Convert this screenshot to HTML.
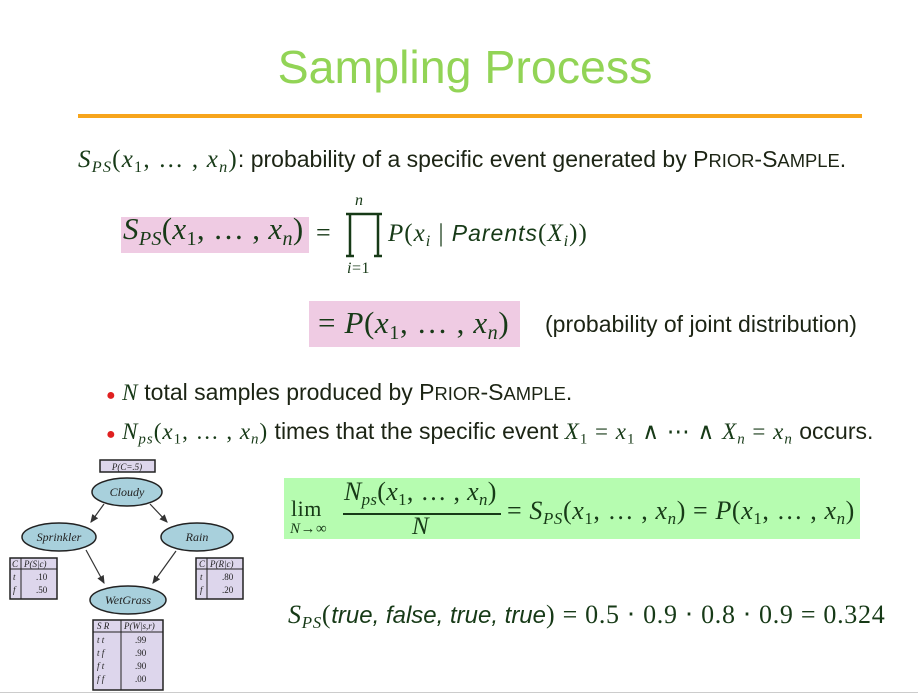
<!DOCTYPE html>
<html><head><meta charset="utf-8"><style>
body{margin:0;width:918px;height:695px;background:#fff;position:relative;overflow:hidden;font-family:"Liberation Sans",sans-serif;color:#1c2414}
.a{position:absolute;white-space:nowrap}
.m{font-family:"Liberation Serif",serif;color:#173a17;letter-spacing:0.5px}
.m i{font-style:italic}
sub{font-size:65%;vertical-align:-0.3em}
.sc{font-size:80%}
.bul{color:#e02020;font-size:16px}
</style></head><body>
<div class="a" style="left:0;width:930px;top:40px;text-align:center;font-size:46.5px;color:#92d456">Sampling Process</div>
<div class="a" style="left:78px;top:114px;width:784px;height:4px;background:#f7a51c"></div>

<div class="a" style="left:78px;top:146px;font-size:23px"><span class="m" style="font-size:25px;letter-spacing:1.2px"><i>S<sub>PS</sub></i>(<i>x</i><sub>1</sub>, … , <i>x<sub>n</sub></i>)</span>: probability of a specific event generated by P<span class="sc">RIOR</span>-S<span class="sc">AMPLE</span>.</div>

<div class="a" style="left:121px;top:217px;width:188px;height:36px;background:#efcbe3"></div>
<div class="a m" style="left:123px;top:211px;font-size:31px;letter-spacing:0.3px"><i>S<sub>PS</sub></i>(<i>x</i><sub>1</sub>, … , <i>x<sub>n</sub></i>)</div>
<div class="a m" style="left:316px;top:218px;font-size:26px">=</div>
<svg class="a" style="left:344px;top:212px" width="40" height="46"><path d="M2 2H38M6 2V44M34 2V44M2 44H10M30 44H38" stroke="#173a17" stroke-width="2.5" fill="none"/></svg>
<div class="a m" style="left:355px;top:192px;font-size:16px"><i>n</i></div>
<div class="a m" style="left:347px;top:260px;font-size:16px"><i>i</i>=1</div>
<div class="a m" style="left:388px;top:220px;font-size:25px;letter-spacing:1px"><i>P</i>(<i>x<sub>i</sub></i> | <i style="font-family:'Liberation Sans',sans-serif;font-size:23px">Parents</i>(<i>X<sub>i</sub></i>))</div>

<div class="a" style="left:309px;top:301px;width:211px;height:46px;background:#efcbe3"></div>
<div class="a m" style="left:318px;top:305px;font-size:31px;letter-spacing:0.6px">= <i>P</i>(<i>x</i><sub>1</sub>, … , <i>x<sub>n</sub></i>)</div>
<div class="a" style="left:545px;top:311px;font-size:23px">(probability of joint distribution)</div>

<div class="a" style="left:106px;top:379px;font-size:23px"><span class="bul">●</span> <span class="m" style="font-size:23px"><i>N</i></span> total samples produced by P<span class="sc">RIOR</span>-S<span class="sc">AMPLE</span>.</div>
<div class="a" style="left:106px;top:418px;font-size:23px"><span class="bul">●</span> <span class="m" style="font-size:23px;letter-spacing:1px"><i>N<sub>ps</sub></i>(<i>x</i><sub>1</sub>, … , <i>x<sub>n</sub></i>)</span> times that the specific event <span class="m" style="font-size:23px;letter-spacing:1px"><i>X</i><sub>1</sub> = <i>x</i><sub>1</sub> ∧ ⋯ ∧ <i>X<sub>n</sub></i> = <i>x<sub>n</sub></i></span> occurs.</div>

<div class="a" style="left:284px;top:478px;width:576px;height:61px;background:#b6fcb0"></div>
<div class="a m" style="left:291px;top:496px;font-size:22px">lim</div>
<div class="a m" style="left:290px;top:521px;font-size:15px"><i>N</i>→∞</div>
<div class="a m" style="left:344px;top:477px;font-size:26px;letter-spacing:0.3px"><i>N<sub>ps</sub></i>(<i>x</i><sub>1</sub>, … , <i>x<sub>n</sub></i>)</div>
<div class="a" style="left:343px;top:513px;width:158px;height:2px;background:#173a17"></div>
<div class="a m" style="left:412px;top:513px;font-size:25px"><i>N</i></div>
<div class="a m" style="left:507px;top:496px;font-size:26px;letter-spacing:0.6px">= <i>S<sub>PS</sub></i>(<i>x</i><sub>1</sub>, … , <i>x<sub>n</sub></i>) = <i>P</i>(<i>x</i><sub>1</sub>, … , <i>x<sub>n</sub></i>)</div>

<div class="a m" style="left:288px;top:600px;font-size:26px;letter-spacing:0.7px"><i>S<sub>PS</sub></i>(<i style="font-family:'Liberation Sans',sans-serif;font-size:24px;letter-spacing:0">true, false, true, true</i>) = 0.5 ⋅ 0.9 ⋅ 0.8 ⋅ 0.9 = 0.324</div>

<svg class="a" style="left:0;top:450px" width="260" height="245" font-family="Liberation Serif" font-style="italic" fill="#222">
<defs><marker id="ar" markerWidth="8" markerHeight="8" refX="6" refY="3" orient="auto"><path d="M0 0L7 3L0 6Z" fill="#333"/></marker></defs>
<rect x="100" y="10" width="55" height="12" fill="#ddd6ec" stroke="#222" stroke-width="1.5"/><text x="127" y="20" font-size="9" text-anchor="middle">P(C=.5)</text>
<ellipse cx="127" cy="42" rx="35" ry="14" fill="#a8d0dc" stroke="#222" stroke-width="1.5"/><text x="127" y="46" font-size="12" text-anchor="middle">Cloudy</text>
<ellipse cx="59" cy="87" rx="37" ry="14" fill="#a8d0dc" stroke="#222" stroke-width="1.5"/><text x="59" y="91" font-size="12" text-anchor="middle">Sprinkler</text>
<ellipse cx="197" cy="87" rx="36" ry="14" fill="#a8d0dc" stroke="#222" stroke-width="1.5"/><text x="197" y="91" font-size="12" text-anchor="middle">Rain</text>
<ellipse cx="128" cy="150" rx="38" ry="14" fill="#a8d0dc" stroke="#222" stroke-width="1.5"/><text x="128" y="154" font-size="12" text-anchor="middle">WetGrass</text>
<g stroke="#333" stroke-width="1.2" marker-end="url(#ar)"><line x1="104" y1="54" x2="91" y2="72"/><line x1="150" y1="54" x2="167" y2="72"/><line x1="86" y1="100" x2="104" y2="133"/><line x1="176" y1="101" x2="153" y2="133"/></g>
<rect x="10" y="108" width="47" height="41" fill="#ddd6ec" stroke="#222" stroke-width="1.5"/><path d="M21 108V149M10 119H57" stroke="#222"/>
<text x="12" y="117" font-size="9">C</text><text x="24" y="117" font-size="9">P(S|c)</text><text x="13" y="130" font-size="9">t</text><text x="36" y="130" font-size="9" font-style="normal">.10</text><text x="13" y="143" font-size="9">f</text><text x="36" y="143" font-size="9" font-style="normal">.50</text>
<rect x="196" y="108" width="47" height="41" fill="#ddd6ec" stroke="#222" stroke-width="1.5"/><path d="M207 108V149M196 119H243" stroke="#222"/>
<text x="199" y="117" font-size="9">C</text><text x="210" y="117" font-size="9">P(R|c)</text><text x="200" y="130" font-size="9">t</text><text x="222" y="130" font-size="9" font-style="normal">.80</text><text x="200" y="143" font-size="9">f</text><text x="222" y="143" font-size="9" font-style="normal">.20</text>
<rect x="93" y="170" width="70" height="70" fill="#ddd6ec" stroke="#222" stroke-width="1.5"/><path d="M121 170V240M93 182H163" stroke="#222"/>
<text x="97" y="179" font-size="9">S  R</text><text x="124" y="179" font-size="9">P(W|s,r)</text>
<text x="97" y="193" font-size="9">t   t</text><text x="135" y="193" font-size="9" font-style="normal">.99</text>
<text x="97" y="206" font-size="9">t   f</text><text x="135" y="206" font-size="9" font-style="normal">.90</text>
<text x="97" y="219" font-size="9">f   t</text><text x="135" y="219" font-size="9" font-style="normal">.90</text>
<text x="97" y="232" font-size="9">f   f</text><text x="135" y="232" font-size="9" font-style="normal">.00</text>
</svg>
<div class="a" style="left:0;top:692px;width:918px;height:1px;background:#ccc"></div>
</body></html>
